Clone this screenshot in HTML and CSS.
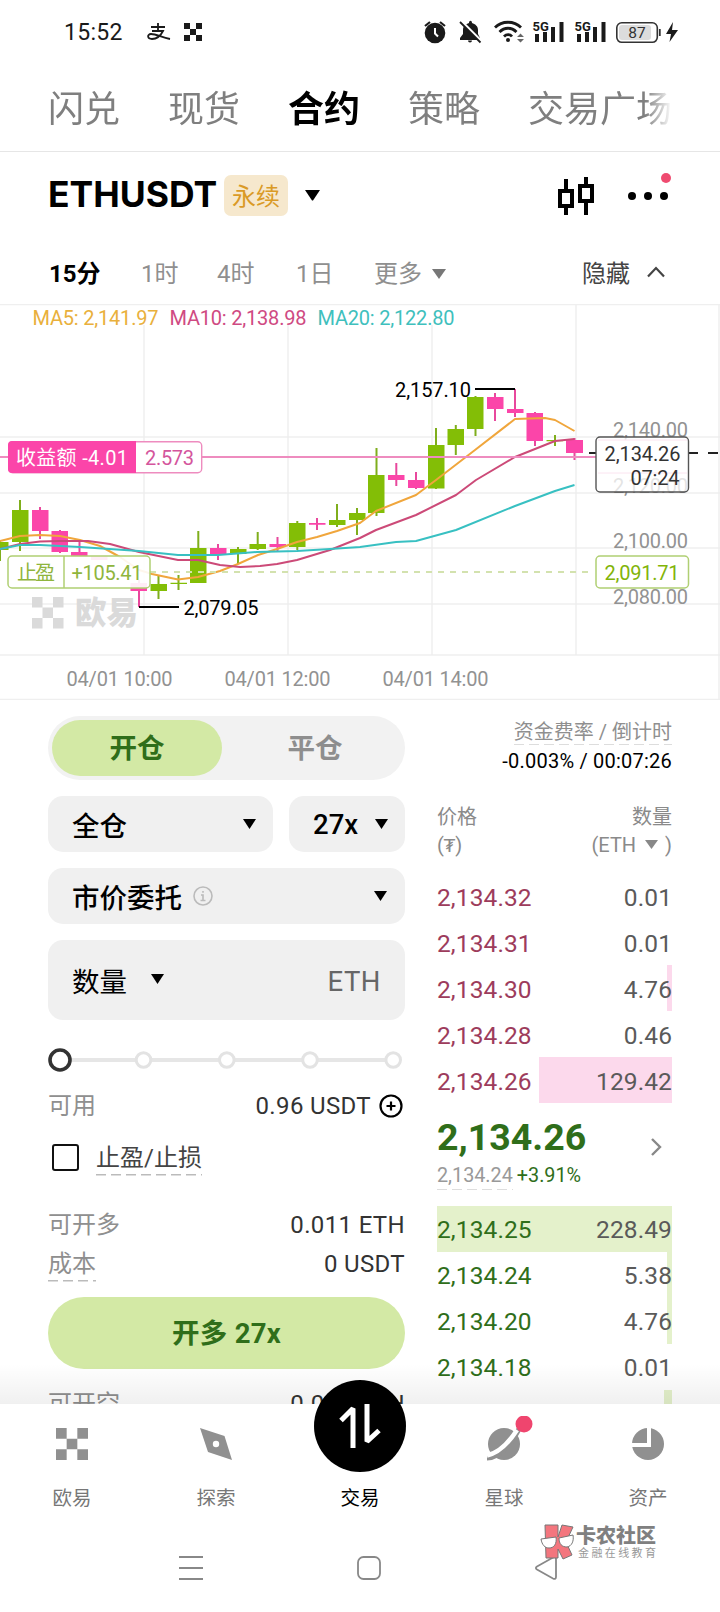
FILE: index.html
```html
<!DOCTYPE html>
<html lang="zh-CN">

<head>
    <meta charset="UTF-8">
    <meta name="viewport" content="width=device-width, initial-scale=1.0">
    <title>ETHUSDT 永续</title>
    <link rel="stylesheet" href="styles.css">
</head>

<body>
    <div class="page">
        <!-- 状态栏 -->
        <div class="status">
            <span class="clock">15:52</span>
            <svg class="alipay" width="24" height="18" viewBox="0 0 24 18" fill="none" stroke="#1a1a1a" stroke-width="1.8">
                <path d="M4 4h14M11 0v8M5 8h11c-2 4-6 8-11 8-5 0-5-5-1-5 5 0 10 3 19 5" />
            </svg>
            <svg class="okx" width="18" height="18" viewBox="0 0 3 3" fill="#1a1a1a">
                <path d="M0 0h1v1H0zM2 0h1v1H2zM1 1h1v1H1zM0 2h1v1H0zM2 2h1v1H2z" />
            </svg>
            <svg class="status-icons" width="260" height="26" viewBox="424 19 260 26">
                <g fill="#1a1a1a">
                    <circle cx="436" cy="33" r="10.3" />
                    <path d="M426 26l5-4M446 26l-5-4" stroke="#1a1a1a" stroke-width="2.2" />
                    <path d="M436 28v5.5l3 3" fill="none" stroke="#fff" stroke-width="2" />
                    <path d="M461 40v-2l3-4v-4c0-4 3-6 6-7 0-3 3-3 3 0 3 1 6 3 6 7v4l2 4v2z" />
                    <path d="M469 40.500h4a2 2 0 0 1-4 0" />
                    <path d="M462 21l21 21" stroke="#fff" stroke-width="3" />
                    <path d="M461 22l20.500 20.500" stroke="#1a1a1a" stroke-width="1.8" />
                </g>
                <g fill="none" stroke="#1a1a1a" stroke-width="2.8">
                    <path d="M496 27.500c7-7 19-7 26 0" />
                    <path d="M500.500 32c5-5 12-5 17 0" />
                    <path d="M505 36.500c2.500-2.500 6-2.500 8 0" />
                </g>
                <circle cx="509" cy="40" r="2" fill="#1a1a1a" />
                <path d="M518 37l3.500-3.500 3.500 3.500zM518 39l3.500 3.500 3.500-3.500z" fill="#666" />
                <g fill="#1a1a1a">
                    <path d="M536 34h4v8h-4zM544 32h4v10h-4zM552 27h4v15h-4zM560.500 22h4v20h-4z" />
                    <text class="fiveg" x="533.500" y="31">5G</text>
                    <path d="M578 34h4v8h-4zM586 32h4v10h-4zM594 27h4v15h-4zM602.500 22h4v20h-4z" />
                    <text class="fiveg" x="575.500" y="31">5G</text>
                </g>
                <rect x="617.800" y="22.800" width="40.500" height="19.500" rx="5" fill="#fff" stroke="#333" stroke-width="1.6" />
                <rect x="620" y="25" width="32" height="15" rx="3" fill="#dcdcdc" />
                <path d="M660.800 29v7" stroke="#333" stroke-width="1.8" />
                <text class="battery" x="638" y="38">87</text>
                <path d="M674 22l-7 12h5l-1.500 8 8.500-12h-6z" fill="#1a1a1a" />
            </svg>
        </div>

        <!-- 顶部标签 -->
        <div class="tabs">
            <span>闪兑</span>
            <span>现货</span>
            <span class="on">合约</span>
            <span>策略</span>
            <span>交易广场</span>
        </div>

        <div class="symbol">
            <b class="pair">ETHUSDT</b>
            <span class="badge">永续</span>
            <svg class="pair-arrow" width="17" height="11" viewBox="0 0 17 11"><path d="M1 0h15l-7 10.500h-1z" /></svg>
            <svg class="candle-icon" width="36" height="38" viewBox="0 0 36 38" fill="none" stroke="#000" stroke-width="4">
                <path d="M8 2v10M8 30v8M28 0v8M28 26v12M2 14h12v15H2zM22 9h12v15H22z" />
            </svg>
            <svg class="more" width="44" height="44" viewBox="0 0 44 44">
                <circle cx="8" cy="24" r="4" /><circle cx="24" cy="24" r="4" /><circle cx="40" cy="24" r="4" />
                <circle cx="42" cy="6" r="5" fill="#ef4b70" />
            </svg>
        </div>

        <div class="times">
            <span class="t1 on">15分</span>
            <span class="t2">1时</span>
            <span class="t3">4时</span>
            <span class="t4">1日</span>
            <span class="t5">更多</span>
            <svg class="drop" width="14" height="10" viewBox="0 0 14 10" fill="#777"><path d="M0 0h14l-7 10z" /></svg>
            <span class="hide">隐藏</span>
            <svg width="18" height="12" viewBox="0 0 18 12" fill="none" stroke="#444" stroke-width="2.2"><path d="M1 10.500l8-8.500 8 8.500" /></svg>
        </div>

        <!-- K线图 -->
        <svg class="chart" width="720" height="396" viewBox="0 304 720 396">
            <path class="grid" d="M0 304.500h720M144 325v330M288 325v330M432 325v330M576 304v351M719 304v396M0 437h720M0 493h720M0 548h720M0 604h720M0 655h720M0 699.500h720" />
            <g fill="#dadada">
                <path d="M32 597h10.500v10.500H32zM53 597h10.500v10.500H53zM42.500 607.500h10.500v10.500H42.500zM32 618h10.500v10.500H32zM53 618h10.500v10.500H53z" />
                <text class="wm" x="75" y="624" textLength="63" lengthAdjust="spacingAndGlyphs">欧易</text>
            </g>
            <text class="ma" x="32.500" y="325" textLength="126" fill="#e9b03c">MA5: 2,141.97</text>
            <text class="ma" x="169.500" y="325" textLength="137" fill="#cf4a82">MA10: 2,138.98</text>
            <text class="ma" x="317.500" y="325" textLength="137" fill="#3fc0bd">MA20: 2,122.80</text>

            <text class="axis" x="613" y="437" textLength="75">2,140.00</text>
            <text class="axis" x="613" y="493" textLength="75">2,120.00</text>
            <text class="axis" x="613" y="548" textLength="75">2,100.00</text>
            <text class="axis" x="613" y="604" textLength="75">2,080.00</text>
            <text class="axis" x="66.500" y="686" textLength="106">04/01 10:00</text>
            <text class="axis" x="224.500" y="686" textLength="106">04/01 12:00</text>
            <text class="axis" x="382.500" y="686" textLength="106">04/01 14:00</text>

            <g class="up">
                <path class="wick" d="M0 541v20M20 500v51M158.500 576v23M178.500 575v15M198.300 531v52M238 547v17M257.700 532v18M297.300 521v29M337 504v23M357 508v27M376.500 448v68M436 428v61M455.800 425v30M475.500 396v40M555 435v11" />
                <path d="M-8 542H8.500v8H-8zM12 510h16.500v32H12zM150.500 584h16.500v7h-16.500zM170.500 582.800h16.500v1.200h-16.500zM190 548h16.500v35H190zM230 549h16.500v5H230zM249.500 544h16.500v5h-16.500zM289 523h16.500v24H289zM329 520h16.500v5H329zM349 513h16.500v7H349zM368 475h16.500v38H368zM428 445h16.500v43.500H428zM447.500 429h16.500v16h-16.500zM467 397h16.500v32H467zM546.500 440h16.500v1.200h-16.500z" />
            </g>
            <g class="down">
                <path class="wick" d="M40 507v32M60 530v23M79.500 541v16M139 580v27M218 544v16M277.500 537v15M317 518v12M396.300 463v23M416 472v17M495 393v28M515 389v28M535 412v34M574.500 438v22" />
                <path d="M32 510h16.500v21H32zM51.500 531h16.500v21H51.500zM71 552h16.500v5H71zM91 556h16.500v4H91zM130.500 583h16.500v8h-16.500zM210 548h16.500v6H210zM269.500 544h16.500v3h-16.500zM309 523h16.500v1.700H309zM388 475h16.500v5H388zM408 480h16.500v8H408zM487 397h16.500v12H487zM507 409h16.500v4H507zM526.500 413h16.500v28h-16.500zM566 440h17v13h-17z" />
            </g>

            <g fill="none" stroke-width="2" stroke-linejoin="round">
                <path stroke="#f0a63c" d="M0 541L20 536 40 535 60 536 80 540 100 546 120 557 139 570 152 574 178 579.500 198 577 220 571 238 564 258 555 277 549 297 542 317 537 337 531 360 523 376 511 416 495 436 480 475 450 515 419 545 418 555 420 574.500 431" />
                <path stroke="#cc4a78" d="M0 549L20 544 40 541.500 60 541 88 541 110 544 139 552 178 560 198 560 220 565 240 567 260 566 277 564 297 560 330 550 360 538 376 530 416 515 456 495 476 480 515 457 535 449 555 441 574.500 439" />
                <path stroke="#38c0c2" d="M0 549L20 545 40 545 80 547 139 551 178 555 218 555 257 552 297 551 330 549 360 547 396 542 416 541 456 530 515 506 555 491 574.500 485" />
            </g>

            <path d="M0 457h596" stroke="#ee8cbf" stroke-width="2" />
            <path d="M150 572h440" stroke="#d3e2ae" stroke-width="2" stroke-dasharray="6 6" />
            <path d="M589 453h7M689 453h9M708 453h10" stroke="#222" stroke-width="2" />
            <path d="M475 389h40M139 607h40" stroke="#000" stroke-width="2" />
            <text class="mark" x="395" y="397" textLength="76">2,157.10</text>
            <text class="mark" x="183.500" y="615" textLength="75">2,079.05</text>

            <!-- 收益额 -->
            <rect x="8.700" y="441.700" width="193" height="31" rx="4" fill="#fff" stroke="#ee8cbf" stroke-width="1.4" />
            <path d="M12 441h124v32H12a4 4 0 0 1-4-4v-24a4 4 0 0 1 4-4z" fill="#fb45a9" />
            <text class="tag" x="16" y="465" textLength="112" fill="#fff">收益额 -4.01</text>
            <text class="tag" x="145" y="465" textLength="49" fill="#d4559c">2.573</text>

            <!-- 止盈 -->
            <rect class="tp" x="8" y="556" width="142" height="32" rx="4" />
            <path class="tp" d="M64 556v32" />
            <text class="tag" x="17" y="580" textLength="38" fill="#8fb53d">止盈</text>
            <text class="tag" x="71.500" y="580" textLength="71" fill="#8fb53d">+105.41</text>
            <rect class="tp" x="596" y="556" width="92.500" height="32" rx="4" />
            <text class="tag" x="604.500" y="580" textLength="75" fill="#82b408">2,091.71</text>

            <!-- 最新价 -->
            <rect x="596" y="437" width="92.500" height="55" rx="4" fill="#fff" fill-opacity=".75" stroke="#555" stroke-width="1.400" />
            <path d="M598 440h89M598 473h89" stroke="#fbe4f0" />
            <text class="tag" x="604.500" y="461" textLength="76" fill="#333">2,134.26</text>
            <text class="tag" x="630.500" y="485" textLength="49" fill="#333">07:24</text>
        </svg>

        <div class="trade">
            <!-- 下单 -->
            <div class="form">
                <div class="seg"><span class="on">开仓</span><span>平仓</span></div>
                <div class="row">
                    <div class="box margin">全仓<svg width="13" height="10" viewBox="0 0 13 10"><path d="M0 0h13l-6.500 10z" /></svg></div>
                    <div class="box lever">27x<svg width="13" height="10" viewBox="0 0 13 10"><path d="M0 0h13l-6.500 10z" /></svg></div>
                </div>
                <div class="box type">市价委托
                    <svg class="info" width="20" height="20" viewBox="0 0 20 20" fill="none" stroke="#bbb" stroke-width="1.6">
                        <circle cx="10" cy="10" r="9" /><path d="M10 5v1.800M8 9h2v5.500M7.500 14.500h5" />
                    </svg>
                    <svg width="13" height="10" viewBox="0 0 13 10"><path d="M0 0h13l-6.500 10z" /></svg>
                </div>
                <div class="box amount">数量
                    <svg width="13" height="10" viewBox="0 0 13 10"><path d="M0 0h13l-6.500 10z" /></svg>
                    <span class="unit">ETH</span>
                </div>
                <svg class="slider" width="357" height="24" viewBox="0 0 357 24" fill="#fff">
                    <path d="M12 12h333" stroke="#e6e6e6" stroke-width="4" />
                    <g stroke="#e3e3e3" stroke-width="3">
                        <circle cx="95.500" cy="12" r="7.300" /><circle cx="178.800" cy="12" r="7.300" /><circle cx="262" cy="12" r="7.300" /><circle cx="345.200" cy="12" r="7.300" />
                    </g>
                    <circle cx="12" cy="12" r="10" stroke="#333" stroke-width="3.600" />
                </svg>
                <div class="kv avail"><span>可用</span><em>0.96 USDT
                    <svg width="24" height="24" viewBox="0 0 24 24" fill="none" stroke="#000" stroke-width="2.200"><circle cx="12" cy="12" r="10.500" /><path d="M12 7.500v9M7.500 12h9" /></svg></em>
                </div>
                <div class="stop"><i class="check"></i><span class="dash">止盈/止损</span></div>
                <div class="kv long"><span>可开多</span><em>0.011 ETH</em></div>
                <div class="kv cost"><span class="dash">成本</span><em>0 USDT</em></div>
                <div class="buy">开多 27x</div>
                <div class="kv short"><span>可开空</span><em>0.011 ETH</em></div>
            </div>

            <!-- 盘口 -->
            <div class="book">
                <div class="rate"><span class="dash">资金费率 / 倒计时</span></div>
                <div class="rate-num">-0.003% / 00:07:26</div>
                <div class="head"><span>价格</span><span>数量</span></div>
                <div class="head"><span>(<i class="tether">₮</i>)</span><span>(ETH <svg width="13" height="9" viewBox="0 0 13 9" fill="#888"><path d="M0 0h13l-6.500 9z" /></svg> )</span></div>
                <div class="asks">
                    <div class="lv"><b>2,134.32</b><span>0.01</span></div>
                    <div class="lv"><b>2,134.31</b><span>0.01</span></div>
                    <div class="lv"><i style="width:2%"></i><b>2,134.30</b><span>4.76</span></div>
                    <div class="lv"><b>2,134.28</b><span>0.46</span></div>
                    <div class="lv"><i style="width:56.600%"></i><b>2,134.26</b><span>129.42</span></div>
                </div>
                <div class="last">
                    <div>
                        <div class="price">2,134.26</div>
                        <div class="sub"><span class="dash">2,134.24</span><span class="chg">+3.91%</span></div>
                    </div>
                    <svg width="12" height="18" viewBox="0 0 12 18" fill="none" stroke="#888" stroke-width="2.400"><path d="M2 1l8 8-8 8" /></svg>
                </div>
                <div class="bids">
                    <div class="lv"><i style="width:100%"></i><b>2,134.25</b><span>228.49</span></div>
                    <div class="lv"><i style="width:2.200%"></i><b>2,134.24</b><span>5.38</span></div>
                    <div class="lv"><i style="width:2%"></i><b>2,134.20</b><span>4.76</span></div>
                    <div class="lv"><b>2,134.18</b><span>0.01</span></div>
                    <div class="lv"><i style="width:3.400%"></i></div>
                </div>
            </div>
            <div class="fade"></div>
        </div>

        <!-- 底部导航 -->
        <div class="nav">
            <div class="item">
                <svg width="32" height="32" viewBox="0 0 3 3" fill="#909090"><path d="M0 0h1v1H0zM2 0h1v1H2zM1 1h1v1H1zM0 2h1v1H0zM2 2h1v1H2z" /></svg>
                欧易
            </div>
            <div class="item">
                <svg width="32" height="32" viewBox="0 0 32 32"><path d="M0 0l24.500 8L32 32 8 24z" fill="#909090" /><circle cx="16" cy="16" r="3.200" fill="#fff" /></svg>
                探索
            </div>
            <div class="item on">
                <svg class="round" width="92" height="92" viewBox="0 0 92 92" fill="none" stroke="#fff" stroke-width="5">
                    <circle cx="46" cy="46" r="46" fill="#000" stroke="none" />
                    <path d="M39 68V28.500L27 40.500M53 24v37.500l12-11" stroke-linejoin="bevel" />
                </svg>
                交易
            </div>
            <div class="item">
                <svg class="planet" width="48" height="48" viewBox="0 0 48 48">
                    <circle cx="18" cy="28" r="16" fill="#909090" />
                    <path d="M1 42C14 42 24 30 33 13" fill="none" stroke="#909090" stroke-width="5" />
                    <path d="M1 39.500C12 37 22 28 31 14" fill="none" stroke="#fff" stroke-width="4.500" />
                    <circle cx="38" cy="8" r="8.500" fill="#ef456e" />
                </svg>
                星球
            </div>
            <div class="item">
                <svg width="32" height="32" viewBox="0 0 32 32"><circle cx="16" cy="16" r="16" fill="#909090" /><path d="M0 17h17V0" fill="none" stroke="#fff" stroke-width="4" /></svg>
                资产
            </div>
        </div>

        <div class="sys">
            <svg width="378" height="26" viewBox="179 1555 378 26" fill="none" stroke="#888" stroke-width="1.800">
                <path d="M179 1557h24M179 1568h24M179 1579h24" />
                <rect x="358" y="1557" width="22" height="22" rx="5.500" />
                <path d="M537 1566.500l16-9c2-1 3 0 3 1.500v18c0 1.500-1 2.500-3 1.500l-16-9c-1.500-1-1.500-2 0-3z" />
            </svg>
            <!-- 水印 -->
            <div class="mark-logo">
                <svg width="35" height="36" viewBox="0 0 35 36">
                    <g fill="#f3767e" stroke="#777" stroke-width="1">
                        <path d="M5 1h13v12l4-12 11 2-7 15 6 13-9 4-5-10v9H6z" />
                    </g>
                    <g fill="#fff" stroke="#777" stroke-width="1">
                        <path d="M1 15l15-2c1 7-2 11-7 11-4 0-7-3-8-9z" /><path d="M19 14l14-3c1 6-1 11-6 12-5 0-8-3-8-9z" />
                    </g>
                </svg>
                <div class="mark-text"><b>卡农社区</b><small>金融在线教育</small></div>
            </div>
        </div>
    </div>
</body>

</html>
```

FILE: styles.css
```css
* {
    box-sizing: border-box;
    padding: 0;
    margin: 0;
}

body {
    background-color: #fff;
    font-family: Roboto, "Noto Sans CJK SC", sans-serif;
    color: #333;
}

i, em {
    font-style: normal;
}

svg {
    display: block;
    flex: none;
}

.page {
    width: 720px;
    height: 1612px;
    overflow: hidden;
    display: flex;
    flex-direction: column;
    white-space: nowrap;
}

/* 状态栏 */
.status {
    height: 64px;
    flex: none;
    display: flex;
    align-items: center;
    padding: 0 37px 0 64px;
}

.clock {
    width: 83px;
    padding-top: 1px;
    font-size: 23px;
    letter-spacing: .3px;
    color: #1a1a1a;
}

.okx {
    margin-left: 13px;
}

.status-icons {
    margin-left: auto;
}

.fiveg {
    font-size: 13px;
    font-weight: 700;
    stroke: #fff;
    stroke-width: 2px;
    paint-order: stroke;
}

.battery {
    font-size: 15.5px;
    text-anchor: middle;
    fill: #333;
}

/* 顶部标签 */
.tabs {
    height: 88px;
    flex: none;
    display: flex;
    gap: 48px;
    padding: 3px 0 0 48px;
    line-height: 87px;
    font-size: 36px;
    color: #7f7f7f;
    border-bottom: 1px solid #e6e6e6;
    -webkit-mask-image: linear-gradient(#000, #000), linear-gradient(90deg, #000 645px, transparent 672px);
    -webkit-mask-size: 100% 1px, 100% 87px;
    -webkit-mask-position: bottom, top;
    -webkit-mask-repeat: no-repeat;
}

.tabs .on {
    color: #000;
    font-weight: 700;
}

/* 交易对 */
.symbol {
    height: 89px;
    flex: none;
    display: flex;
    align-items: center;
    padding: 0 48px 2px 48px;
}

.pair {
    width: 176px;
    margin-top: -2px;
    font-family: Inter, Roboto, sans-serif;
    font-size: 35.5px;
    color: #000;
}

.badge {
    width: 64px;
    height: 41px;
    line-height: 44px;
    border-radius: 7px;
    background: #f6e8cd;
    color: #da9a26;
    font-size: 24px;
    text-align: center;
}

.pair-arrow {
    margin-left: 16px;
}

.candle-icon {
    margin-left: auto;
    margin-right: 30px;
}

.more {
    margin-right: 4px;
    margin-top: -4px;
    overflow: visible;
}

/* 周期 */
.times {
    height: 63px;
    flex: none;
    display: flex;
    align-items: center;
    padding: 0 55px 2px 49px;
    font-size: 24px;
    color: #8f8f8f;
}

.times .on {
    color: #000;
    font-weight: 700;
}

.t1 { width: 92px; }
.t2 { width: 76px; }
.t3 { width: 79px; }
.t4 { width: 78px; }
.t5 { width: 58px; }

.drop {
    margin-top: 4px;
}

.hide {
    margin-left: auto;
    margin-right: 17px;
    color: #444;
}

/* K线图 */
.chart {
    flex: none;
    font-size: 20px;
}

.grid {
    stroke: #efefef;
    stroke-width: 1.5px;
    fill: none;
}

.axis {
    fill: #929292;
}

.mark {
    fill: #000;
}

.wm {
    font-size: 32px;
    font-weight: 900;
}

.up { fill: #83be06; }
.down { fill: #fb45a9; }
.wick { stroke-width: 2px; }
.up .wick { stroke: #7fae1c; }
.down .wick { stroke: #e8489d; }

.tp {
    fill: #fff;
    fill-opacity: .9;
    stroke: #b0cf73;
    stroke-width: 1.5px;
}

/* 交易区 */
.trade {
    position: relative;
    height: 704px;
    flex: none;
    overflow: hidden;
    display: flex;
    gap: 32px;
    padding: 16px 48px 0;
}

.form {
    width: 357px;
    flex: none;
}

.seg {
    display: flex;
    gap: 8px;
    height: 64px;
    padding: 4px;
    border-radius: 32px;
    background: #f2f2f2;
    font-size: 27.5px;
    font-weight: 700;
    line-height: 58px;
    text-align: center;
    color: #8e8e8e;
}

.seg span {
    flex: none;
    width: 170px;
    border-radius: 28px;
}

.seg .on {
    background: #d3e9a5;
    color: #2f6e1a;
}

.row {
    display: flex;
    gap: 16px;
}

.box {
    height: 56px;
    display: flex;
    align-items: center;
    margin-top: 16px;
    padding: 0 17px 0 24px;
    border-radius: 15px;
    background: #f0f0f0;
    font-size: 27.5px;
    font-weight: 500;
    color: #000;
}

.box svg:last-child {
    margin-left: auto;
}

.margin { width: 225px; }
.lever { width: 116px; }
.type { padding-right: 18px; }

.info {
    margin-left: 11px;
}

.amount {
    height: 80px;
    font-weight: 400;
    padding-right: 24px;
}

.amount svg {
    margin: -3px 0 0 24px;
}

.unit {
    margin-left: auto;
    margin-top: 2px;
    letter-spacing: .5px;
    color: #666;
}

.slider {
    margin-top: 28px;
}

.kv {
    display: flex;
    justify-content: space-between;
    align-items: center;
    height: 30px;
    line-height: 32px;
    font-size: 24px;
    color: #8f8f8f;
}

.kv em {
    display: flex;
    align-items: center;
    gap: 8px;
    letter-spacing: .35px;
    color: #333;
}

.avail {
    margin-top: 19px;
    padding-right: 2px;
}

.dash {
    /* 虚线下划线 */
    background: repeating-linear-gradient(90deg, #bbb 0 10px, transparent 10px 15px) 0 100% / 100% 1.5px no-repeat;
}

.stop {
    display: flex;
    align-items: center;
    height: 34px;
    margin-top: 20px;
    padding-left: 4px;
    line-height: 35px;
    font-size: 24px;
    color: #444;
}

.check {
    width: 27px;
    height: 27px;
    margin-right: 17px;
    margin-top: -2px;
    border: 2px solid #111;
    border-radius: 3px;
}

.long {
    margin-top: 35px;
}

.cost {
    height: 34px;
    margin-top: 7px;
    line-height: 35px;
}

.buy {
    height: 72px;
    margin-top: 16px;
    border-radius: 36px;
    background: #d3e9a5;
    color: #2f6e1a;
    font-size: 27.5px;
    font-weight: 700;
    letter-spacing: .3px;
    line-height: 74px;
    text-align: center;
}

.short {
    margin-top: 20px;
}

/* 盘口 */
.book {
    width: 235px;
    flex: none;
}

.rate {
    height: 29px;
    line-height: 32px;
    font-size: 20px;
    color: #8f8f8f;
    text-align: right;
}

.rate .dash,
.sub .dash {
    display: inline-block;
    background-image: repeating-linear-gradient(90deg, #ddd 0 10px, transparent 10px 15px);
}

.rate .dash {
    height: 29px;
}

.rate-num {
    height: 32px;
    line-height: 33px;
    margin-bottom: 26px;
    font-size: 20px;
    letter-spacing: .22px;
    color: #000;
    text-align: right;
}

.head {
    display: flex;
    justify-content: space-between;
    height: 28px;
    line-height: 29px;
    font-size: 20px;
    color: #8a8a8a;
}

.head svg {
    display: inline-block;
    margin: 0 2px 3px 4px;
}

.tether {
    font-family: "DejaVu Sans", sans-serif;
    font-size: 18px;
    line-height: 1;
}

.asks {
    margin-top: 14px;
}

.lv {
    position: relative;
    display: flex;
    justify-content: space-between;
    height: 46px;
    line-height: 49px;
    font-size: 24.5px;
    color: #5a5a5a;
}

/* 深度条 */
.lv i {
    position: absolute;
    top: 0;
    right: 0;
    bottom: 0;
}

.lv b, .lv span {
    position: relative;
    font-weight: 400;
    letter-spacing: .1px;
}

.asks i { background: #fcd9ec; }
.asks b { color: #9d3c5c; }
.bids i { background: #e4f1cb; }
.bids b { color: #2f6e1a; }

.bids .lv {
    line-height: 47px;
}

.last {
    height: 103px;
    display: flex;
    justify-content: space-between;
    padding: 13px 10px 0 0;
}

.last svg {
    margin-top: 22px;
}

.price {
    height: 43px;
    line-height: 42px;
    font-size: 37.5px;
    font-weight: 700;
    color: #2f6e1a;
}

.sub {
    display: flex;
    gap: 4px;
    height: 31px;
    line-height: 34px;
    font-size: 19.8px;
    color: #999;
}

.chg {
    color: #2f6e1a;
}

.fade {
    position: absolute;
    left: 0;
    right: 0;
    bottom: 0;
    height: 40px;
    background: linear-gradient(rgba(0, 0, 0, 0), rgba(0, 0, 0, .06));
}

/* 底部导航 */
.nav {
    position: relative;
    height: 116px;
    flex: none;
    display: flex;
    background: #fff;
}

.item {
    width: 144px;
    height: 109px;
    display: flex;
    flex-direction: column;
    align-items: center;
    justify-content: space-between;
    padding-top: 24px;
    font-size: 19.5px;
    line-height: 28px;
    color: #777;
}

.item.on {
    color: #000;
}

.round {
    margin-top: -48px;
}

.planet {
    margin: -12px 0 0 12px;
}

/* 系统按键 */
.sys {
    position: relative;
    height: 92px;
    padding: 35px 0 0 179px;
}

.mark-logo {
    position: absolute;
    left: 540px;
    top: 4px;
    display: flex;
    gap: 1px;
}

.mark-text {
    display: flex;
    flex-direction: column;
    padding-top: 1px;
    color: #808080;
}

.mark-text b {
    font-size: 20px;
    font-weight: 900;
    line-height: 22px;
}

.mark-text small {
    margin-left: 2px;
    font-size: 11px;
    line-height: 13px;
    letter-spacing: 2.4px;
    color: #999;
}
```
